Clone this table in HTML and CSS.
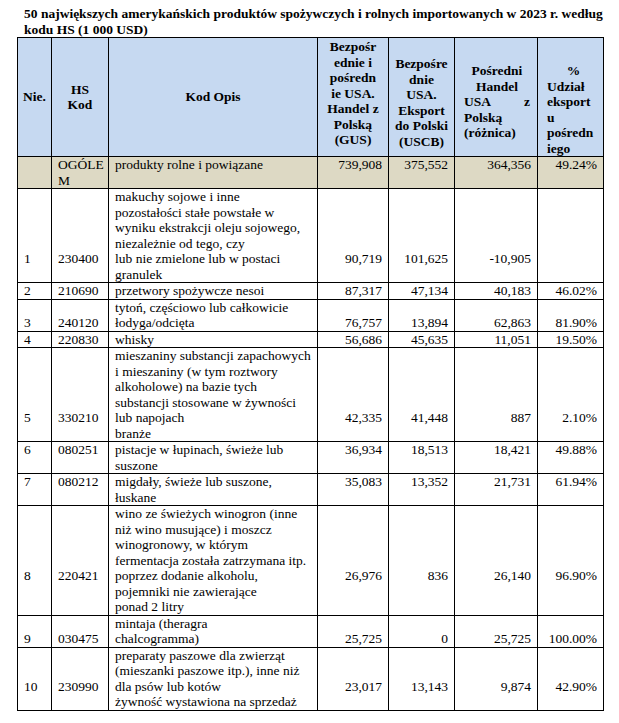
FILE: index.html
```html
<!DOCTYPE html>
<html lang="pl">
<head>
<meta charset="utf-8">
<title>50 największych amerykańskich produktów</title>
<link rel="stylesheet" href="styles.css">
</head>
<body>
<div class="page">
  <h1 class="title">50 największych amerykańskich produktów spożywczych i rolnych importowanych w 2023 r. według<br>kodu HS (1 000 USD)</h1>
  <table class="grid">
    <colgroup>
      <col class="c-nie"><col class="c-hs"><col class="c-desc"><col class="c-n1"><col class="c-n2"><col class="c-n3"><col class="c-n4">
    </colgroup>
    <thead>
      <tr class="head">
        <th class="h-mid">Nie.</th>
        <th class="h-mid">HS<br>Kod</th>
        <th class="h-mid">Kod Opis</th>
        <th class="h-top h-gus">Bezpośr<br>ednie i<br>pośredn<br>ie USA.<br>Handel z<br>Polską<br>(GUS)</th>
        <th class="h-top h-uscb">Bezpośre<br>dnie<br>USA.<br>Eksport<br>do Polski<br>(USCB)</th>
        <th class="h-top h-diff">
          <div class="center">Pośredni<br>Handel</div>
          <div class="split"><span>USA</span><span>z</span></div>
          <div>Polską<br>(różnica)</div>
        </th>
        <th class="h-top h-share"><div class="center">%</div>Udział<br>eksport<br>u<br>pośredn<br>iego</th>
      </tr>
    </thead>
    <tbody>
      <tr class="total at1">
        <td class="v"></td>
        <td class="v">OGÓLE<br>M</td>
        <td class="desc">produkty rolne i powiązane</td>
        <td class="v num">739,908</td>
        <td class="v num">375,552</td>
        <td class="v num">364,356</td>
        <td class="v num">49.24%</td>
      </tr>
      <tr class="at5">
        <td class="v">1</td>
        <td class="v">230400</td>
        <td class="desc">makuchy sojowe i inne<br>pozostałości stałe powstałe w<br>wyniku ekstrakcji oleju sojowego,<br>niezależnie od tego, czy<br>lub nie zmielone lub w postaci<br>granulek</td>
        <td class="v num">90,719</td>
        <td class="v num">101,625</td>
        <td class="v num">-10,905</td>
        <td class="v num"></td>
      </tr>
      <tr class="at1">
        <td class="v">2</td>
        <td class="v">210690</td>
        <td class="desc">przetwory spożywcze nesoi</td>
        <td class="v num">87,317</td>
        <td class="v num">47,134</td>
        <td class="v num">40,183</td>
        <td class="v num">46.02%</td>
      </tr>
      <tr class="at2">
        <td class="v">3</td>
        <td class="v">240120</td>
        <td class="desc">tytoń, częściowo lub całkowicie<br>łodyga/odcięta</td>
        <td class="v num">76,757</td>
        <td class="v num">13,894</td>
        <td class="v num">62,863</td>
        <td class="v num">81.90%</td>
      </tr>
      <tr class="at1">
        <td class="v">4</td>
        <td class="v">220830</td>
        <td class="desc">whisky</td>
        <td class="v num">56,686</td>
        <td class="v num">45,635</td>
        <td class="v num">11,051</td>
        <td class="v num">19.50%</td>
      </tr>
      <tr class="at5">
        <td class="v">5</td>
        <td class="v">330210</td>
        <td class="desc">mieszaniny substancji zapachowych<br>i mieszaniny (w tym roztwory<br>alkoholowe) na bazie tych<br>substancji stosowane w żywności<br>lub napojach<br>branże</td>
        <td class="v num">42,335</td>
        <td class="v num">41,448</td>
        <td class="v num">887</td>
        <td class="v num">2.10%</td>
      </tr>
      <tr class="at1">
        <td class="v">6</td>
        <td class="v">080251</td>
        <td class="desc">pistacje w łupinach, świeże lub<br>suszone</td>
        <td class="v num">36,934</td>
        <td class="v num">18,513</td>
        <td class="v num">18,421</td>
        <td class="v num">49.88%</td>
      </tr>
      <tr class="at1">
        <td class="v">7</td>
        <td class="v">080212</td>
        <td class="desc">migdały, świeże lub suszone,<br>łuskane</td>
        <td class="v num">35,083</td>
        <td class="v num">13,352</td>
        <td class="v num">21,731</td>
        <td class="v num">61.94%</td>
      </tr>
      <tr class="at5">
        <td class="v">8</td>
        <td class="v">220421</td>
        <td class="desc">wino ze świeżych winogron (inne<br>niż wino musujące) i moszcz<br>winogronowy, w którym<br>fermentacja została zatrzymana itp.<br>poprzez dodanie alkoholu,<br>pojemniki nie zawierające<br>ponad 2 litry</td>
        <td class="v num">26,976</td>
        <td class="v num">836</td>
        <td class="v num">26,140</td>
        <td class="v num">96.90%</td>
      </tr>
      <tr class="at2">
        <td class="v">9</td>
        <td class="v">030475</td>
        <td class="desc">mintaja (theragra<br>chalcogramma)</td>
        <td class="v num">25,725</td>
        <td class="v num">0</td>
        <td class="v num">25,725</td>
        <td class="v num">100.00%</td>
      </tr>
      <tr class="at3">
        <td class="v">10</td>
        <td class="v">230990</td>
        <td class="desc">preparaty paszowe dla zwierząt<br>(mieszanki paszowe itp.), inne niż<br>dla psów lub kotów<br>żywność wystawiona na sprzedaż</td>
        <td class="v num">23,017</td>
        <td class="v num">13,143</td>
        <td class="v num">9,874</td>
        <td class="v num">42.90%</td>
      </tr>
    </tbody>
  </table>
</div>
</body>
</html>
```

FILE: styles.css
```css
:root {
  --lh: 15.5px;
}

html, body {
  margin: 0;
  padding: 0;
  background: #ffffff;
}

body {
  font-family: "Liberation Serif", "Times New Roman", serif;
  font-size: 13.5px;
  line-height: var(--lh);
  color: #000000;
}

.page {
  padding: 6px 0 0 17px;
}

.title {
  margin: 0 0 0 7px;
  font-size: 13.5px;
  line-height: var(--lh);
  font-weight: bold;
  white-space: nowrap;
}

.grid {
  border-collapse: collapse;
  table-layout: fixed;
  width: 586px;
}

.c-nie { width: 34px; }
.c-hs { width: 57px; }
.c-desc { width: 209px; }
.c-n1 { width: 71px; }
.c-n2 { width: 66px; }
.c-n3 { width: 83px; }
.c-n4 { width: 66px; }

.grid th,
.grid td {
  border: 1px solid #000000;
  white-space: nowrap;
  overflow: visible;
}

.grid td {
  padding: 0 6px;
  vertical-align: top;
}

.head {
  height: 119px;
}

.grid th {
  background: #c6d9f1;
  font-weight: bold;
  text-align: center;
  padding: 0 3px;
}

.grid th.h-mid { vertical-align: middle; }
.grid th.h-top { vertical-align: top; }
.grid th.h-gus { padding-top: 1px; }
.grid th.h-uscb { padding-top: 18px; }
.grid th.h-diff {
  padding-top: 25px;
  padding-left: 9px;
  padding-right: 7px;
  text-align: left;
}
.grid th.h-share {
  padding-top: 25px;
  padding-left: 9px;
  text-align: left;
}

.center { text-align: center; }

.split {
  display: flex;
  justify-content: space-between;
}

.desc { text-align: left; }

.num { text-align: right; }

.total td { background: #ddd9c4; }

.at1 .v { padding-top: 0; }
.at2 .v { padding-top: calc(var(--lh) * 1); }
.at3 .v { padding-top: calc(var(--lh) * 2); }
.at5 .v { padding-top: calc(var(--lh) * 4); }
```
